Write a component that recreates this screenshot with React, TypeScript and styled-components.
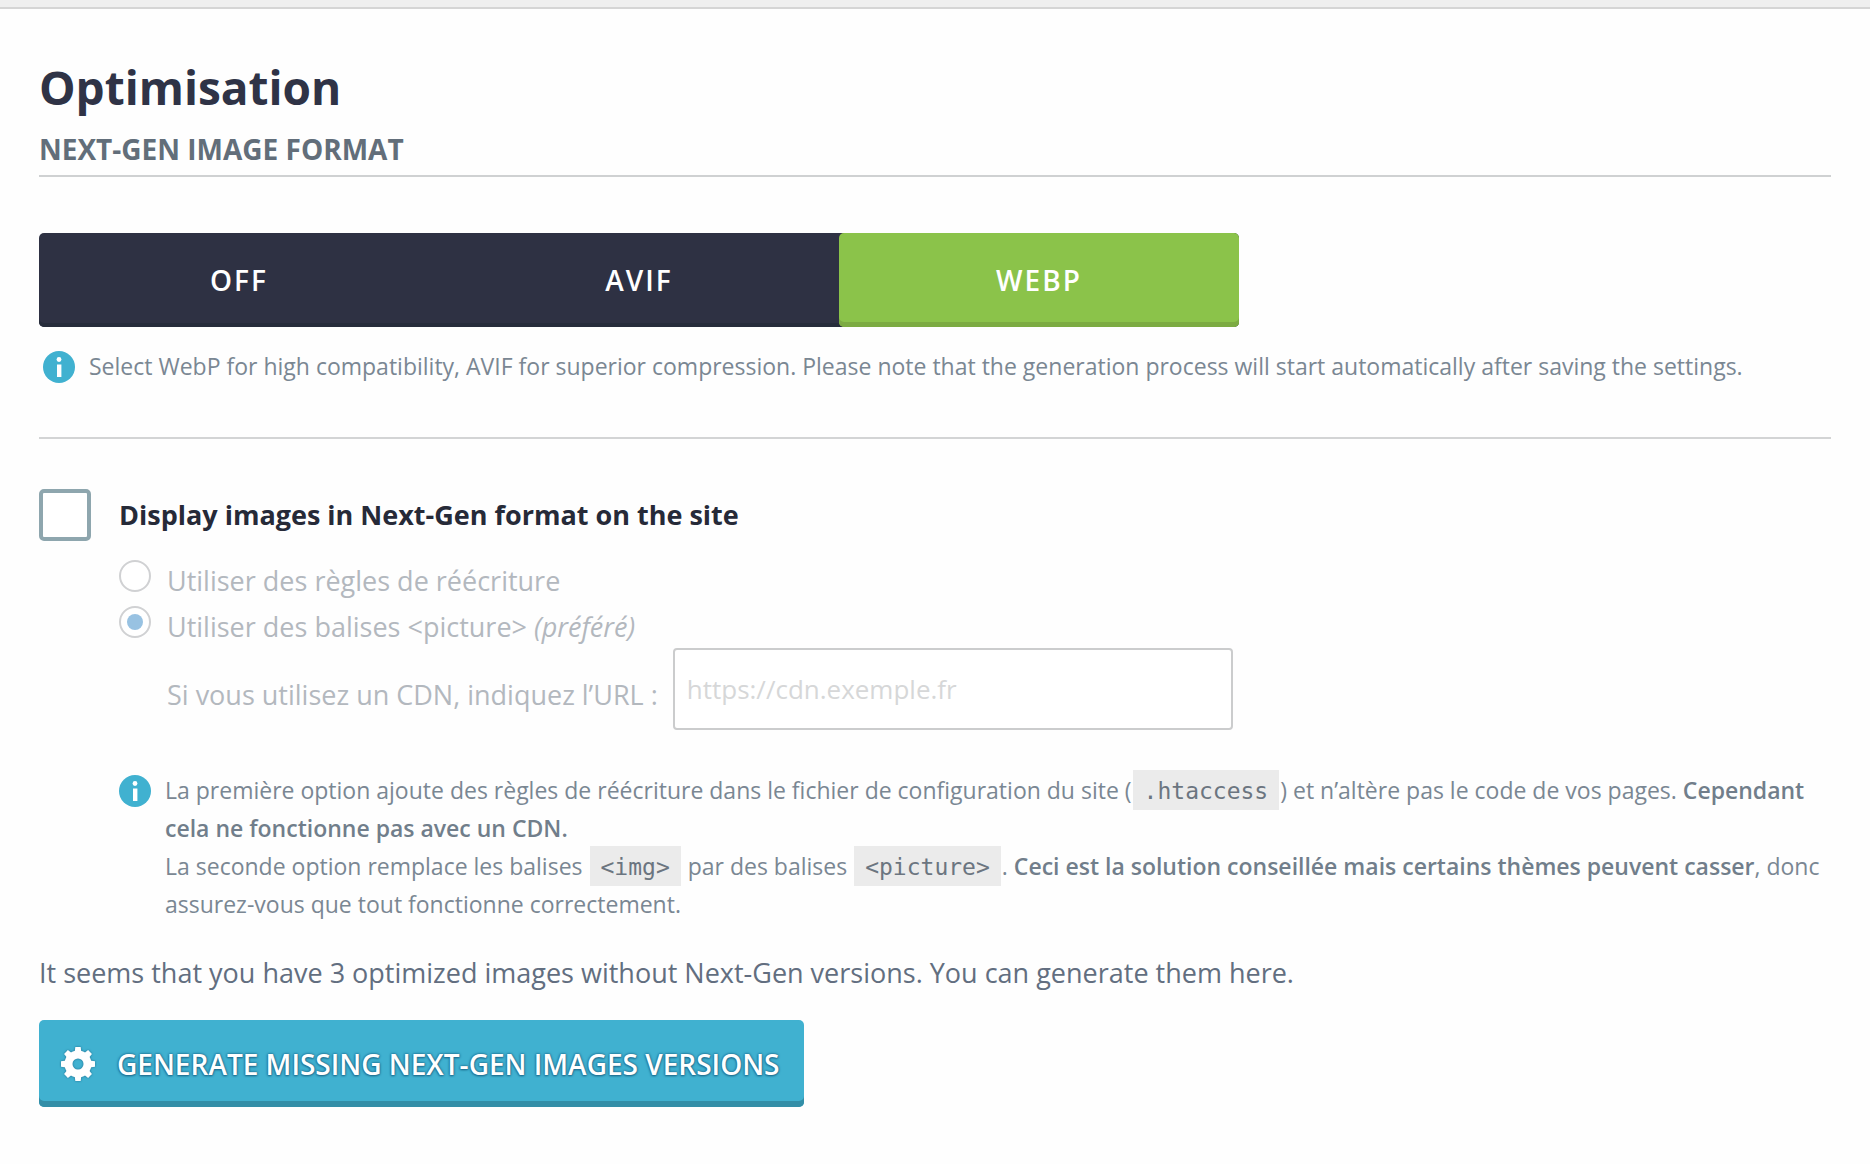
import React, { useState } from "react";
import styled, { createGlobalStyle } from "styled-components";

const GlobalStyle = createGlobalStyle`
  *, *::before, *::after { box-sizing: border-box; }
  body {
    margin: 0;
    background: #fefefe;
    font-family: "Open Sans", "Noto Sans", sans-serif;
    color: #2e3242;
  }
`;

const TopBar = styled.div`
  height: 9px;
  background: #efefef;
  border-bottom: 2px solid #d5d5d5;
`;

const Page = styled.main`
  padding: 50px 39px 56px;
`;

const Title = styled.h1`
  margin: 0 0 16px;
  font-size: 46px;
  line-height: 56px;
  font-weight: 700;
  color: #2f3346;
`;

const SectionTitle = styled.h2`
  margin: 0 0 56px;
  padding-bottom: 8px;
  border-bottom: 2px solid #cfd1d2;
  font-size: 28px;
  line-height: 36px;
  font-weight: 700;
  text-transform: uppercase;
  color: #626e7a;
`;

const Segments = styled.div`
  display: grid;
  grid-template-columns: repeat(3, 1fr);
  max-width: 1200px;
  height: 94px;
  border-radius: 5px;
  background: #2e3143;
  box-shadow: inset 0 -4px 0 #262c3b;
`;

const Segment = styled.label<{ $active: boolean }>`
  display: grid;
  place-items: center;
  border-radius: 5px;
  cursor: pointer;
  font-size: 28px;
  font-weight: 600;
  letter-spacing: 2px;
  color: #fff;
  background: ${(p) => (p.$active ? "#8bc34a" : "transparent")};
  box-shadow: ${(p) => (p.$active ? "inset 0 -5px 0 #7cab42" : "none")};
`;

const SegmentInput = styled.input`
  grid-area: 1 / 1;
  appearance: none;
  margin: 0;
  width: 100%;
  height: 100%;
`;

const SegmentText = styled.span`
  grid-area: 1 / 1;
`;

const Info = styled.div<{ $indent?: boolean }>`
  display: flex;
  align-items: flex-start;
  gap: 14px;
  margin-top: ${(p) => (p.$indent ? "41px" : "20px")};
  padding-left: ${(p) => (p.$indent ? "0" : "4px")};
  font-size: 23px;
  line-height: 38px;
  color: #7a8793;
`;

const InfoText = styled.p`
  margin: 0;
`;

const InfoSvg = styled.svg`
  flex: none;
  width: 32px;
  height: 32px;
  margin-top: 4px;
`;

const Strong = styled.strong`
  font-weight: 600;
  color: #717e8b;
`;

const Code = styled.code`
  margin: 0 1px;
  padding: 8px 11px 6px;
  line-height: 1;
  background: #ebebeb;
  font-family: "DejaVu Sans Mono", monospace;
  font-size: 23px;
  color: #6b7580;
`;

const Divider = styled.hr`
  margin: 52px 0 50px;
  border: 0;
  border-top: 2px solid #d3d4d5;
`;

const CheckRow = styled.label`
  display: flex;
  align-items: center;
  gap: 28px;
  font-size: 27px;
  font-weight: 700;
  line-height: 52px;
  color: #262a38;
`;

const CheckBox = styled.input`
  appearance: none;
  flex: none;
  width: 52px;
  height: 52px;
  margin: 0;
  border: 4px solid #8ea6ae;
  border-radius: 5px;
  background: #fff;
  &:checked {
    background: #8ea6ae;
    box-shadow: inset 0 0 0 6px #fff;
  }
`;

const Options = styled.div`
  padding-left: 80px;
`;

const RadioGroup = styled.div`
  display: grid;
  gap: 4px;
  margin-top: 19px;
`;

const RadioRow = styled.label`
  display: flex;
  align-items: flex-start;
  gap: 16px;
  font-size: 27px;
  line-height: 42px;
  color: #b3b8be;
`;

const Radio = styled.input`
  appearance: none;
  flex: none;
  display: grid;
  place-items: center;
  width: 32px;
  height: 32px;
  margin: 0;
  border: 2px solid #d0d1d3;
  border-radius: 50%;
  background: #fff;
  &:checked::before {
    content: "";
    width: 16px;
    height: 16px;
    border-radius: 50%;
    background: #98c2e2;
  }
`;

const CdnRow = styled.div`
  display: flex;
  align-items: center;
  gap: 15px;
  padding-left: 48px;
`;

const CdnLabel = styled.label`
  padding-top: 12px;
  font-size: 27px;
  line-height: 42px;
  color: #b3b8be;
`;

const CdnInput = styled.input`
  width: 560px;
  height: 82px;
  padding: 0 12px;
  border: 2px solid #cbcccd;
  border-radius: 4px;
  background: #fff;
  font: inherit;
  font-size: 26px;
  color: #626e7a;
  &::placeholder {
    color: #d6d7d8;
    opacity: 1;
  }
`;

const Notice = styled.p`
  margin: 31px 0 28px;
  font-size: 27px;
  line-height: 38px;
  color: #626e80;
`;

const GenerateButton = styled.button`
  display: inline-flex;
  align-items: center;
  gap: 22px;
  height: 87px;
  padding: 0 24px 0 22px;
  border: 0;
  border-radius: 5px;
  background: #40b1d0;
  box-shadow: inset 0 -6px 0 #338ea7;
  font: inherit;
  font-size: 28px;
  font-weight: 600;
  text-transform: uppercase;
  color: #fff;
  text-shadow: 0 0 2px #1f6f92, 0 0 3px #1f6f92, 0 1px 2px #1f6f92;
  cursor: pointer;
`;

const GearSvg = styled.svg`
  flex: none;
  width: 34px;
  height: 34px;
  overflow: visible;
  filter: drop-shadow(0 0 1px #1f6f92);
`;

function InfoIcon() {
  return (
    <InfoSvg viewBox="0 0 32 32" aria-hidden="true">
      <circle cx="16" cy="16" r="16" fill="#40b1d0" />
      <circle cx="16" cy="8.5" r="2.4" fill="#fff" />
      <rect x="14" y="13.5" width="4.4" height="12.5" fill="#fff" />
    </InfoSvg>
  );
}

function GearIcon() {
  const teeth = [0, 45, 90, 135, 180, 225, 270, 315];
  return (
    <GearSvg viewBox="0 0 34 34" aria-hidden="true">
      <circle cx="17" cy="17" r="9.5" fill="none" stroke="#fff" strokeWidth="8" />
      {teeth.map((a) => (
        <path
          key={a}
          d="M13.6 5.5 L14.3 0 H19.7 L20.4 5.5 Z"
          fill="#fff"
          transform={`rotate(${a} 17 17)`}
        />
      ))}
    </GearSvg>
  );
}

const FORMATS = ["OFF", "AVIF", "WEBP"];

export default function App() {
  const [format, setFormat] = useState("WEBP");
  const [method, setMethod] = useState("picture");

  return (
    <>
      <GlobalStyle />
      <TopBar />
      <Page>
        <Title>Optimisation</Title>
        <SectionTitle>Next-Gen image format</SectionTitle>

        <Segments role="radiogroup" aria-label="Next-Gen image format">
          {FORMATS.map((f) => (
            <Segment key={f} $active={f === format}>
              <SegmentInput
                type="radio"
                name="format"
                checked={f === format}
                onChange={() => setFormat(f)}
              />
              <SegmentText>{f}</SegmentText>
            </Segment>
          ))}
        </Segments>

        <Info>
          <InfoIcon />
          <InfoText>
            Select WebP for high compatibility, AVIF for superior compression. Please note that the
            generation process will start automatically after saving the settings.
          </InfoText>
        </Info>

        <Divider />

        <CheckRow>
          <CheckBox type="checkbox" name="display" />
          Display images in Next-Gen format on the site
        </CheckRow>

        <Options>
          <RadioGroup>
            <RadioRow>
              <Radio
                type="radio"
                name="method"
                checked={method === "rewrite"}
                onChange={() => setMethod("rewrite")}
              />
              <span>Utiliser des règles de réécriture</span>
            </RadioRow>
            <RadioRow>
              <Radio
                type="radio"
                name="method"
                checked={method === "picture"}
                onChange={() => setMethod("picture")}
              />
              <span>
                Utiliser des balises &lt;picture&gt; <em>(préféré)</em>
              </span>
            </RadioRow>
          </RadioGroup>

          <CdnRow>
            <CdnLabel htmlFor="cdn">Si vous utilisez un CDN, indiquez l’URL :</CdnLabel>
            <CdnInput id="cdn" type="text" placeholder="https://cdn.exemple.fr" />
          </CdnRow>

          <Info $indent>
            <InfoIcon />
            <InfoText>
              La première option ajoute des règles de réécriture dans le fichier de configuration du
              site (<Code>.htaccess</Code>) et n’altère pas le code de vos pages.{" "}
              <Strong>Cependant cela ne fonctionne pas avec un CDN.</Strong>
              <br />
              La seconde option remplace les balises <Code>&lt;img&gt;</Code> par des balises{" "}
              <Code>&lt;picture&gt;</Code>.{" "}
              <Strong>Ceci est la solution conseillée mais certains thèmes peuvent casser</Strong>,
              donc assurez-vous que tout fonctionne correctement.
            </InfoText>
          </Info>
        </Options>

        <Notice>
          It seems that you have 3 optimized images without Next-Gen versions. You can generate them
          here.
        </Notice>

        <GenerateButton type="button">
          <GearIcon />
          Generate missing Next-Gen images versions
        </GenerateButton>
      </Page>
    </>
  );
}
